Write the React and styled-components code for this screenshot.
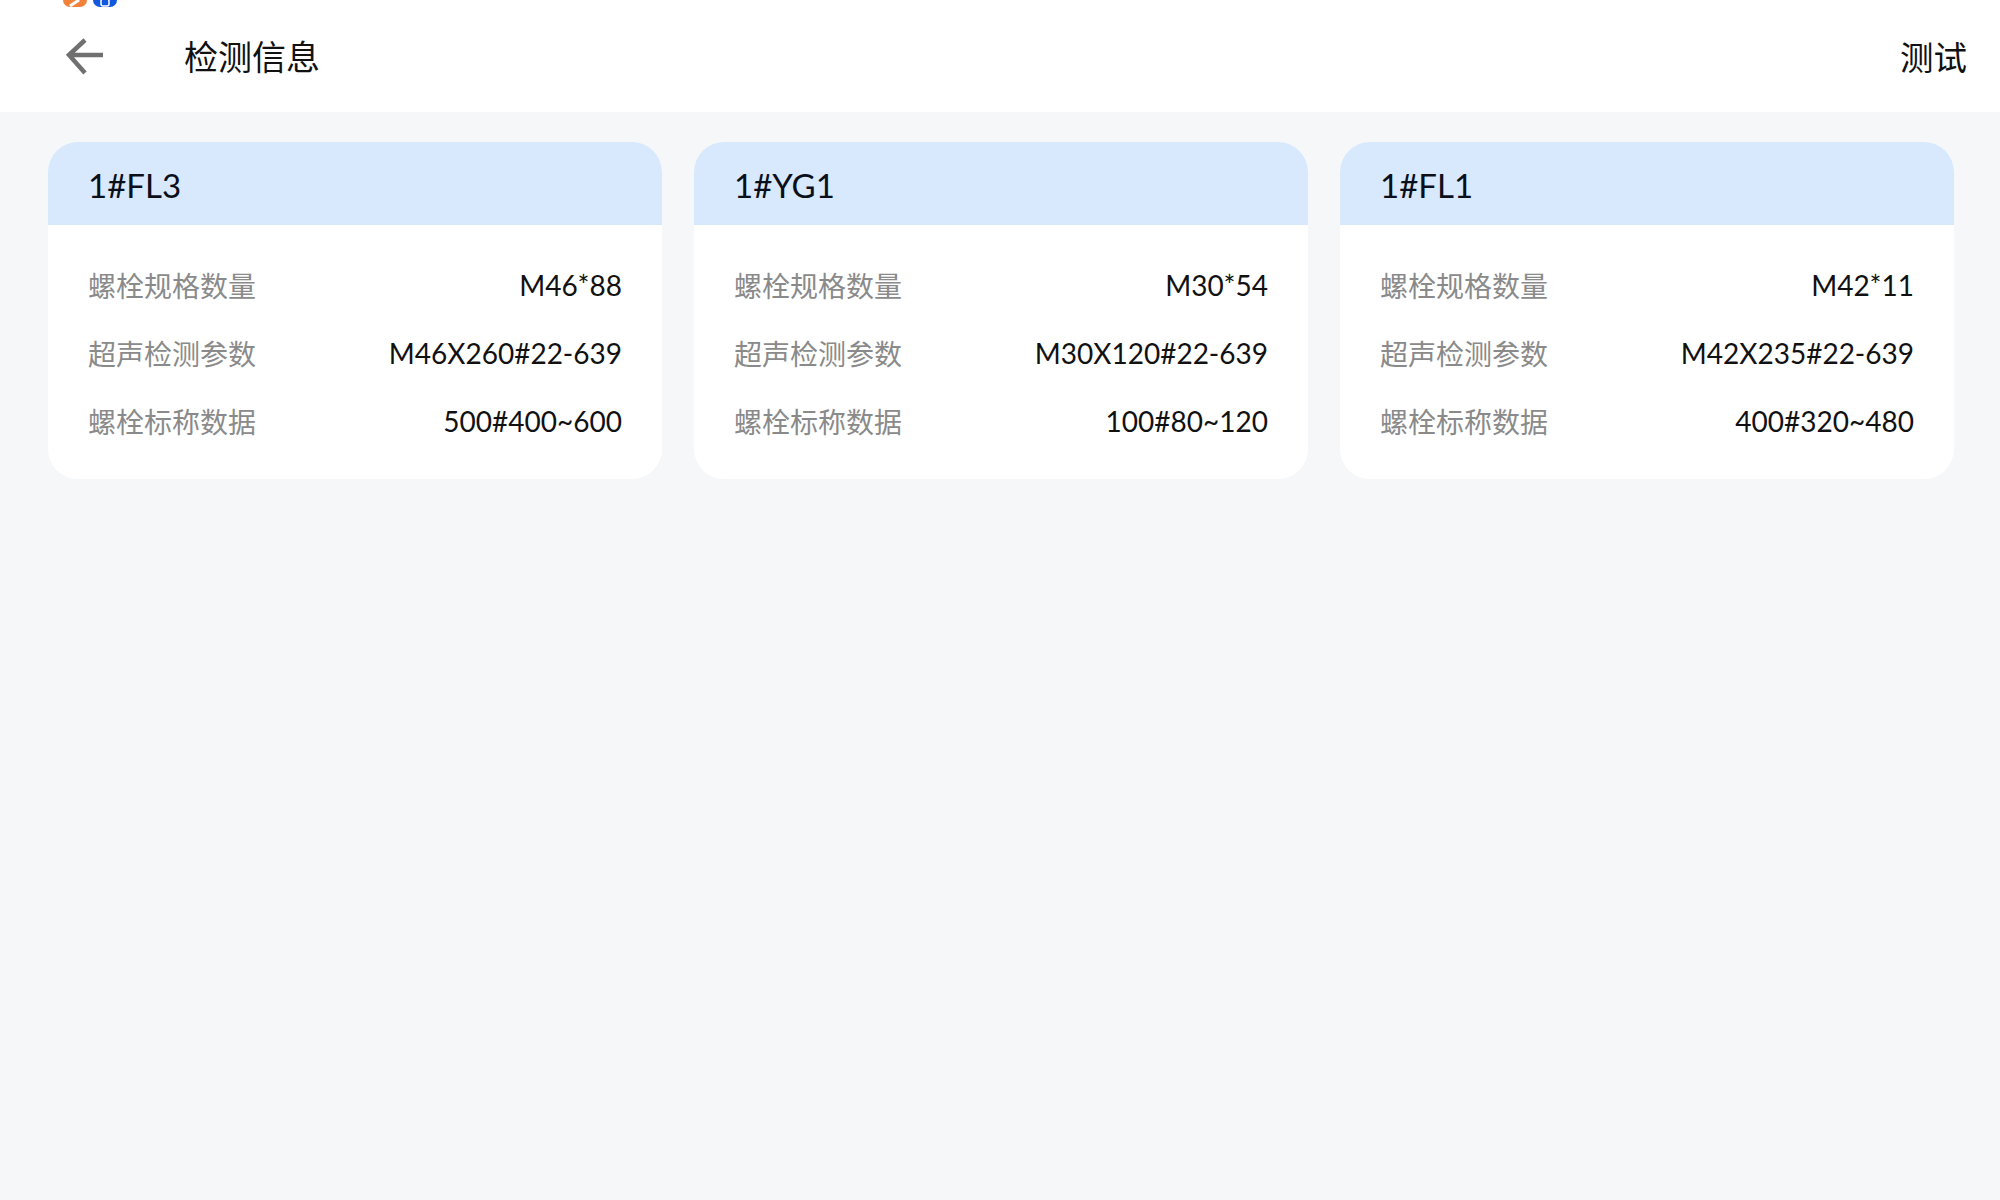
import React from "react";
import styled, { createGlobalStyle } from "styled-components";

const GlobalStyle = createGlobalStyle`
  html, body {
    margin: 0;
    padding: 0;
    background: #f5f7f9;
    font-family: Lato, "Noto Sans CJK SC", sans-serif;
  }
`;

const Page = styled.div`
  width: 2000px;
  height: 1200px;
  overflow: hidden;
  background: #f5f7f9;
`;

const Header = styled.header`
  position: relative;
  height: 112px;
  background: #fff;
  display: flex;
  align-items: center;
  padding: 0 33px 0 65px;
  box-sizing: border-box;
`;

const StatusIcons = styled.div`
  position: absolute;
  top: -17px;
  left: 63px;
  display: flex;
  gap: 6px;
`;

const StatusIcon = styled.div`
  width: 24px;
  height: 24px;
  border-radius: 7px;
  background: ${props => props.color};
  display: flex;
  align-items: flex-end;
  justify-content: center;
`;

const BackButton = styled.div`
  width: 40px;
  height: 40px;
  margin-top: 2px;
  display: flex;
  align-items: center;
  justify-content: center;
  margin-right: 79px;
`;

const Title = styled.h1`
  flex: 1;
  margin: 0;
  font-size: 34px;
  font-weight: 400;
  line-height: 1;
  color: #111;
  font-family: "Noto Sans CJK SC", sans-serif;
`;

const HeaderAction = styled.div`
  font-size: 33.5px;
  line-height: 1;
  color: #111;
  margin-bottom: 1px;
  font-family: "Noto Sans CJK SC", sans-serif;
`;

const CardGrid = styled.main`
  display: grid;
  grid-template-columns: repeat(3, 614px);
  gap: 32px;
  padding: 30px 0 0 48px;
`;

const Card = styled.section`
  height: 337px;
  border-radius: 30px;
  background: #fff;
  overflow: hidden;
`;

const CardHeader = styled.div`
  height: 83px;
  padding: 2px 40px 0;
  box-sizing: border-box;
  background: #d8e8fd;
  display: flex;
  align-items: center;
  font-size: 33px;
  color: #0a0f1a;
`;

const CardBody = styled.div`
  padding: 40px 40px 0;
  display: flex;
  flex-direction: column;
  gap: 28px;
`;

const Row = styled.div`
  height: 40px;
  display: flex;
  align-items: center;
  justify-content: space-between;
  font-size: 28px;
`;

const Label = styled.span`
  color: #8a8a8a;
  font-family: "Noto Sans CJK SC", sans-serif;
`;

const Value = styled.span`
  color: #111;
`;

const cards = [
  { name: "1#FL3", spec: "M46*88", param: "M46X260#22-639", nominal: "500#400~600" },
  { name: "1#YG1", spec: "M30*54", param: "M30X120#22-639", nominal: "100#80~120" },
  { name: "1#FL1", spec: "M42*11", param: "M42X235#22-639", nominal: "400#320~480" },
];

export default function App() {
  return (
    <Page>
      <GlobalStyle />
      <Header>
        <StatusIcons>
          <StatusIcon color="#f2813a">
            <svg width="14" height="8" viewBox="0 0 14 8" fill="none">
              <path d="M2 7L11 1" stroke="#fff" strokeWidth="3" />
            </svg>
          </StatusIcon>
          <StatusIcon color="#1257e0">
            <svg width="12" height="8" viewBox="0 0 12 8" fill="none">
              <rect x="2" y="0" width="8" height="7" rx="2" stroke="#fff" strokeWidth="1.5" />
            </svg>
          </StatusIcon>
        </StatusIcons>
        <BackButton>
          <svg width="40" height="40" viewBox="0 0 40 40" fill="none">
            <path d="M38 18H4M20 3L4 18l16 18" stroke="#707070" strokeWidth="4.5" />
          </svg>
        </BackButton>
        <Title>检测信息</Title>
        <HeaderAction>测试</HeaderAction>
      </Header>
      <CardGrid>
        {cards.map(c => (
          <Card key={c.name}>
            <CardHeader>{c.name}</CardHeader>
            <CardBody>
              <Row>
                <Label>螺栓规格数量</Label>
                <Value>{c.spec}</Value>
              </Row>
              <Row>
                <Label>超声检测参数</Label>
                <Value>{c.param}</Value>
              </Row>
              <Row>
                <Label>螺栓标称数据</Label>
                <Value>{c.nominal}</Value>
              </Row>
            </CardBody>
          </Card>
        ))}
      </CardGrid>
    </Page>
  );
}
